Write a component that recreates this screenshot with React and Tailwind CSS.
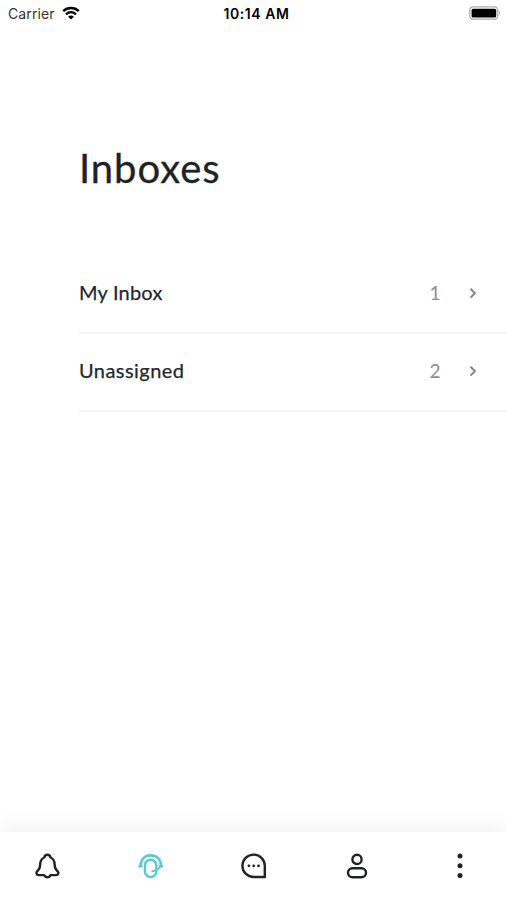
const inboxes = [
  { name: "My Inbox", count: 1, tracking: "tracking-[0.2px]" },
  { name: "Unassigned", count: 2, tracking: "tracking-[0.45px]" },
];

function StatusBar() {
  return (
    <div className="flex h-7 items-center justify-between pl-2 pr-[6px] font-['Inter',sans-serif] text-black">
      <div className="flex flex-1 items-center gap-[7px]">
        <span className="text-[14px] leading-7 tracking-[0.1px] text-[#333]">Carrier</span>
        <svg className="-mt-0.5" width="18" height="14" viewBox="0 0 18 14" fill="none" stroke="black" strokeWidth="2.4">
          <path d="M1.2 5.2C5.6 1 12.4 1 16.8 5.2" />
          <path d="M4 8.3c2.9-2.7 7.1-2.7 10 0" />
          <path d="M9 13.6 6.1 10.7c1.7-1.5 4.1-1.5 5.8 0Z" fill="black" stroke="none" />
        </svg>
      </div>
      <span className="pl-1 text-[14px] font-semibold leading-7 tracking-[0.55px]">10:14 AM</span>
      <div className="flex flex-1 justify-end">
        <svg className="-mt-0.5" width="32" height="14" viewBox="0 0 32 14">
          <rect x="0.8" y="0.8" width="28" height="12.4" rx="3.5" fill="white" stroke="#aaa" strokeWidth="1.3" />
          <rect x="2.6" y="2.7" width="24.6" height="8.8" rx="1.5" fill="black" />
          <path d="M30 5v4c1.5-.5 1.5-3.5 0-4Z" fill="#aaa" />
        </svg>
      </div>
    </div>
  );
}

function InboxRow({ inbox }) {
  return (
    <div className="flex h-[78px] items-center border-b-2 border-[#f5f5f6] pb-[3px] pr-[30px]">
      <span className={`-mt-0.5 flex-1 text-[20px] leading-6 text-[#25272b] [-webkit-text-stroke:0.25px_#25272b] ${inbox.tracking}`}>
        {inbox.name}
      </span>
      <span className="w-3 text-center text-[19px] leading-6 text-[#8b8d90]">{inbox.count}</span>
      <svg className="ml-7 mt-px" width="8" height="12" viewBox="0 0 8 12" fill="none" stroke="#85878a" strokeWidth="2">
        <path d="m1.5 1.8 4.4 4.4-4.4 4.4" />
      </svg>
    </div>
  );
}

function TabBar() {
  return (
    <nav className="flex h-[68px] items-center justify-between bg-white px-[34px] text-[#202226] shadow-[0_-4px_24px_rgba(0,0,0,0.06)]">
      {/* Notifications */}
      <svg width="26" height="26" viewBox="0 0 26 26" fill="none" stroke="currentColor" strokeWidth="2.4" strokeLinejoin="round">
        <path d="M13.4 1.8c-1.7 0-2.8 1-3.1 2.7-2.7 1.1-4 3.6-4.1 6.8 0 2.9-.4 4.5-2.2 6.1-2.6 1.8-1.6 4.7.8 4.7h5.5c.5 1.4 1.6 2.2 3.1 2.2s2.600-.8 3.100-2.200H22c2.400 0 3.400-2.900.8-4.700-1.800-1.600-2.200-3.200-2.200-6.100-.1-3.200-1.400-5.700-4.100-6.800-.3-1.700-1.400-2.700-3.100-2.700Z" />
      </svg>
      {/* Inboxes */}
      <svg className="text-[#57cbd0]" width="26" height="26" viewBox="0 0 26 26" fill="none" stroke="currentColor" strokeWidth="2.4" strokeLinecap="round" strokeLinejoin="round">
        <path d="M3.5 12.8C3.8 6.4 7.9 2.4 13.8 2.4s10 4 10.3 10.4" strokeWidth="2.7" />
        <path d="M2.4 13.4h2.2M23 13.4h2" />
        <rect x="7.9" y="6.8" width="11.4" height="17.3" rx="5.7" />
        <path d="M23 13.4c-.8 2.5-3.7 4-7.8 5" strokeWidth="2" />
      </svg>
      {/* Conversations */}
      <svg width="26" height="26" viewBox="0 0 26 26" fill="none" stroke="currentColor" strokeWidth="2.4" strokeLinejoin="round">
        <path d="M12.6 1.6a11.2 11.2 0 1 0 0 22.4h11.2V12.8A11.2 11.2 0 0 0 12.6 1.6Z" />
        <g fill="currentColor" stroke="none">
          <circle cx="7.9" cy="12.8" r="1.4" />
          <circle cx="12.7" cy="12.8" r="1.4" />
          <circle cx="17.5" cy="12.8" r="1.4" />
        </g>
      </svg>
      {/* Contacts */}
      <svg width="26" height="26" viewBox="0 0 26 26" fill="none" stroke="currentColor" strokeWidth="2.4">
        <circle cx="13" cy="6.4" r="4.6" />
        <rect x="4" y="15.2" width="18" height="9" rx="4.5" />
      </svg>
      {/* More */}
      <svg width="26" height="26" viewBox="0 0 26 26" fill="currentColor">
        <circle cx="13" cy="3" r="2.5" />
        <circle cx="13" cy="12.8" r="2.5" />
        <circle cx="13" cy="22.5" r="2.5" />
      </svg>
    </nav>
  );
}

function App() {
  return (
    <div className="flex h-screen w-full flex-col overflow-hidden bg-white font-['Lato',sans-serif]">
      <StatusBar />
      <main className="flex-1 pl-[79px] pt-[115px]">
        <h1 className="text-[40px] leading-[50px] tracking-[0.95px] text-[#202226] [-webkit-text-stroke:0.3px_#202226]">Inboxes</h1>
        <div className="mt-[63px]">
          {inboxes.map((inbox) => (
            <InboxRow key={inbox.name} inbox={inbox} />
          ))}
        </div>
      </main>
      <TabBar />
    </div>
  );
}

export default App;
